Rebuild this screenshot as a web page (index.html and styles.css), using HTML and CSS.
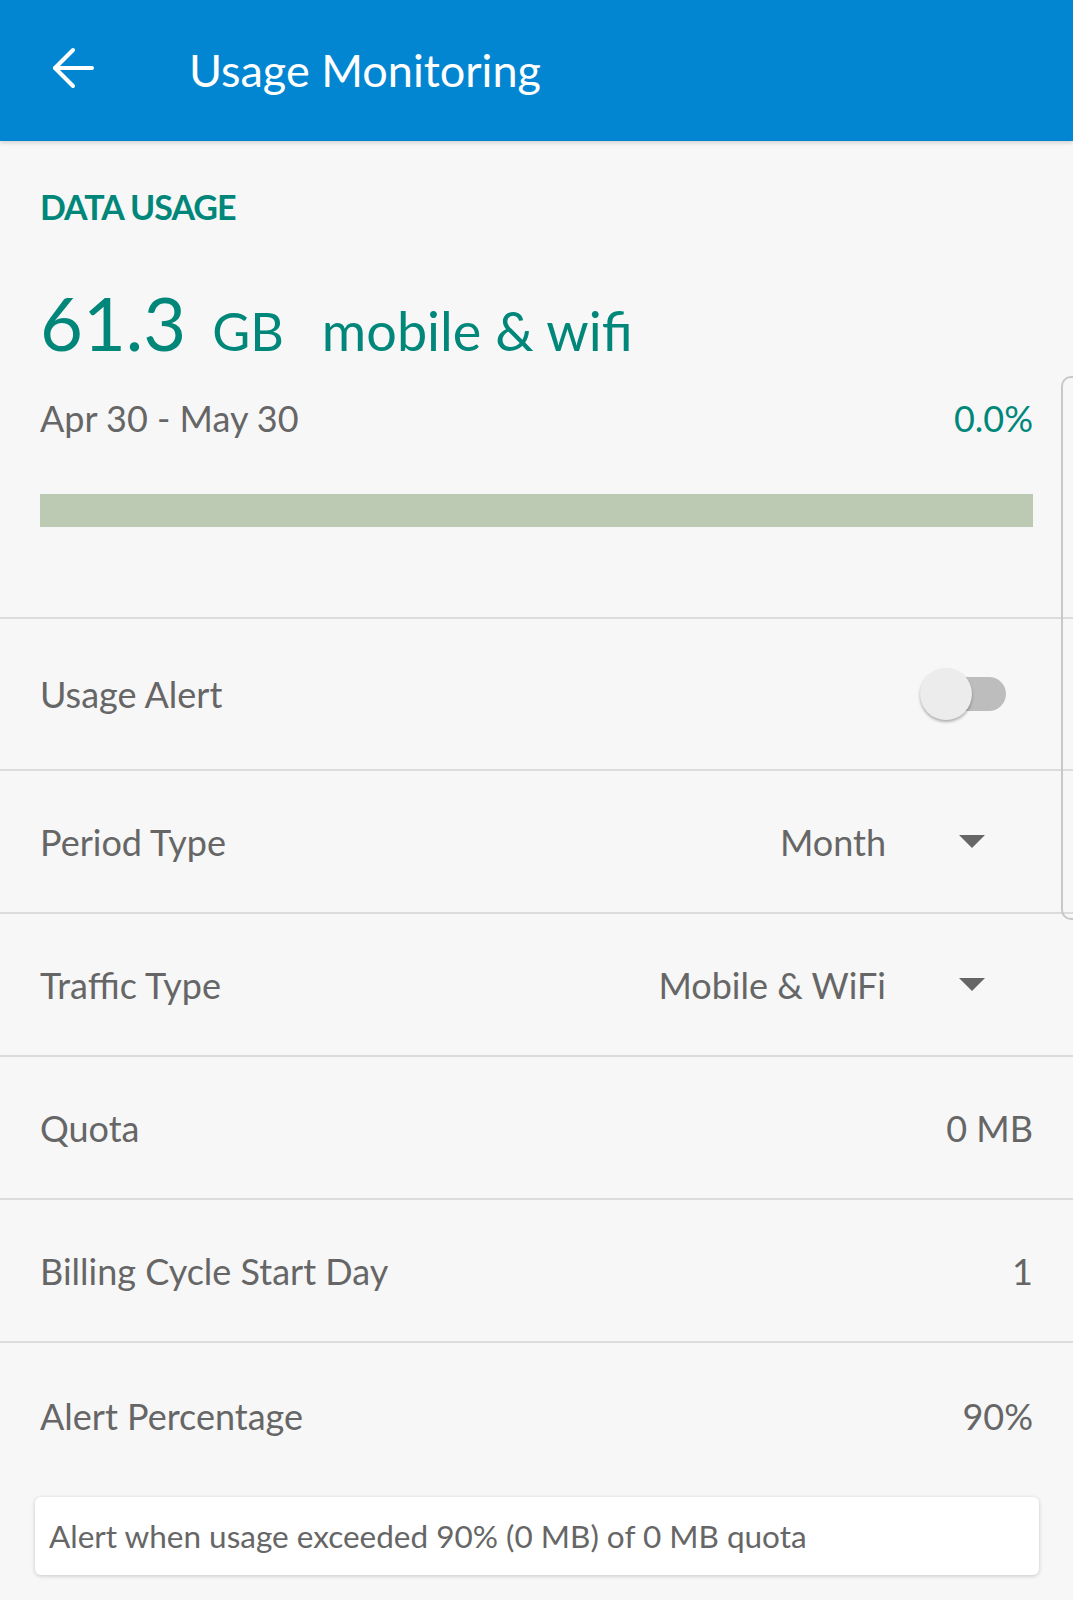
FILE: index.html
```html
<!DOCTYPE html>
<html lang="en">
<head>
  <meta charset="UTF-8">
  <meta name="viewport" content="width=device-width, initial-scale=1.0">
  <title>Usage Monitoring</title>
  <link rel="stylesheet" href="styles.css">
</head>
<body>
  <header class="app-bar">
    <svg class="back-icon" width="42" height="42" viewBox="0 0 42 42" fill="none" stroke="#fff" stroke-width="4" stroke-linecap="round" stroke-linejoin="round">
      <path d="M40 21H3"></path>
      <path d="M21 3L3 21l18 18"></path>
    </svg>
    <h1>Usage Monitoring</h1>
  </header>

  <main class="content">
    <section class="usage">
      <h2 class="section-title">DATA USAGE</h2>
      <div class="usage-amount">
        <span class="amount">61.3</span>
        <span class="unit">GB</span>
        <span class="kind">mobile &amp; wifi</span>
      </div>
      <div class="usage-period">
        <span>Apr 30 - May 30</span>
        <span class="percent">0.0%</span>
      </div>
      <div class="bar"></div>
    </section>

    <div class="row row-first">
      <span class="label">Usage Alert</span>
      <span class="switch"><span class="thumb"></span></span>
    </div>
    <div class="row">
      <span class="label">Period Type</span>
      <span class="select">Month <span class="caret"></span></span>
    </div>
    <div class="row">
      <span class="label">Traffic Type</span>
      <span class="select">Mobile &amp; WiFi <span class="caret"></span></span>
    </div>
    <div class="row">
      <span class="label">Quota</span>
      <span class="value">0 MB</span>
    </div>
    <div class="row">
      <span class="label">Billing Cycle Start Day</span>
      <span class="value">1</span>
    </div>
    <div class="row row-last">
      <span class="label">Alert Percentage</span>
      <span class="value">90%</span>
    </div>

    <div class="note">Alert when usage exceeded 90% (0 MB) of 0 MB quota</div>
  </main>

  <div class="scroll-handle"></div>
</body>
</html>
```

FILE: styles.css
```css
:root {
  --blue: #0286d2;
  --teal: #00877a;
  --text: #666666;
  --line: #dcdcdc;
  --bg: #f7f7f7;
}

body {
  margin: 0;
  background-color: var(--bg);
  font-family: Lato, 'Open Sans', sans-serif;
  color: var(--text);
}

.app-bar {
  height: 141px;
  background-color: var(--blue);
  display: flex;
  align-items: center;
  padding-left: 52px;
  box-shadow: 0 2px 4px rgba(0, 0, 0, 0.15);
}

.back-icon {
  flex-shrink: 0;
  margin-top: -6px;
}

.app-bar h1 {
  margin: -2px 0 0 95px;
  font-weight: 400;
  font-size: 45px;
  color: #fff;
}

.content {
  padding-bottom: 26px;
}

.usage {
  padding: 0 40px;
}

.section-title {
  margin: 0;
  padding-top: 46px;
  font-size: 34px;
  font-weight: 700;
  letter-spacing: -1px;
  color: var(--teal);
  line-height: 40px;
}

.usage-amount {
  display: flex;
  align-items: baseline;
  color: var(--teal);
  margin-top: 56px;
  line-height: 80px;
}

.amount {
  font-size: 74px;
}

.unit {
  font-size: 52px;
  margin-left: 26px;
}

.kind {
  font-size: 54px;
  margin-left: 38px;
}

.usage-period {
  display: flex;
  justify-content: space-between;
  font-size: 36px;
  line-height: 44px;
  margin-top: 25px;
}

.percent {
  color: var(--teal);
}

.bar {
  height: 33px;
  margin-top: 54px;
  margin-bottom: 90px;
  background-color: #bdcab3;
}

.row {
  height: 141px;
  padding: 0 40px;
  display: flex;
  justify-content: space-between;
  align-items: center;
  border-top: 2px solid var(--line);
  font-size: 36px;
}

.row-first {
  height: 150px;
}

.row-last {
  height: 145px;
}

.label,
.value {
  color: var(--text);
}

.select {
  display: flex;
  align-items: center;
  margin-right: 48px;
}

.caret {
  width: 0;
  height: 0;
  margin-left: 73px;
  border-left: 13px solid transparent;
  border-right: 13px solid transparent;
  border-top: 13px solid #666;
}

.switch {
  position: relative;
  width: 76px;
  height: 34px;
  margin-right: 27px;
  border-radius: 17px;
  background-color: #bdbdbd;
}

.thumb {
  position: absolute;
  left: -10px;
  top: -9px;
  width: 52px;
  height: 52px;
  border-radius: 50%;
  background-color: #ececec;
  box-shadow: 0 2px 3px rgba(0, 0, 0, 0.3);
}

.note {
  margin: 9px 34px 0 35px;
  height: 78px;
  padding: 0 14px;
  display: flex;
  align-items: center;
  background-color: #fff;
  border-radius: 6px;
  box-shadow: 0 1px 4px rgba(0, 0, 0, 0.2);
  font-size: 31.5px;
  color: var(--text);
}

.scroll-handle {
  position: absolute;
  top: 376px;
  right: -10px;
  width: 18px;
  height: 540px;
  border: 2px solid #c8c8c8;
  border-radius: 10px;
}
```
